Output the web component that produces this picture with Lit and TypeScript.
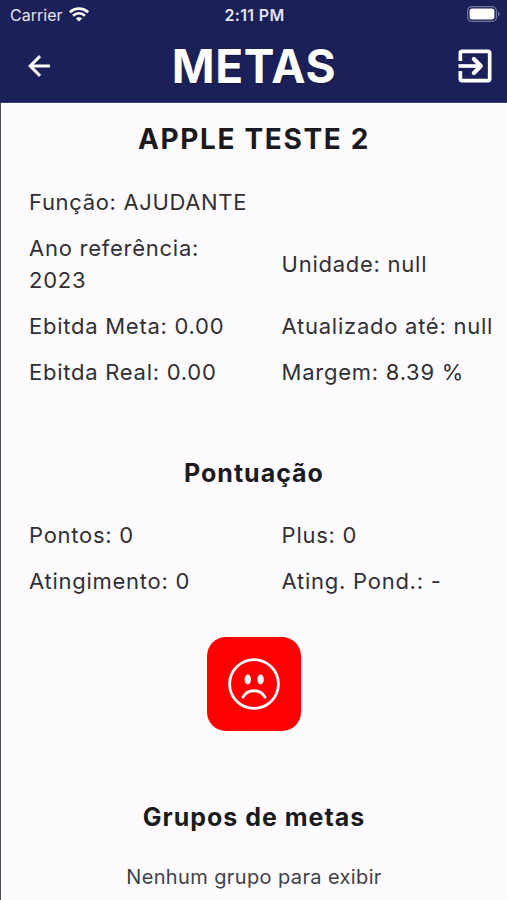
import { LitElement, html, css } from "lit";
import { customElement } from "lit/decorators.js";

@customElement("app-header")
class AppHeader extends LitElement {
  static styles = css`
    :host {
      display: flex;
      flex-direction: column;
      height: 103px;
      box-sizing: border-box;
      background: #1b2059;
      border-bottom: 1px solid #3d406c;
      color: #fff;
    }
    .status {
      display: grid;
      grid-template-columns: 1fr auto 1fr;
      align-items: center;
      height: 30px;
      padding: 0 8px 0 10px;
      font-size: 16px;
      color: #e3e4ef;
    }
    .carrier {
      display: flex;
      align-items: center;
      gap: 6px;
      letter-spacing: 0.02px;
    }
    .time {
      font-weight: 600;
      font-size: 16px;
      letter-spacing: 0.35px;
    }
    .battery {
      justify-self: end;
      display: block;
      margin-top: -2px;
      margin-right: -1px;
    }
    .wifi {
      display: block;
      margin-top: -1px;
    }
    .bar {
      display: grid;
      grid-template-columns: 76px 1fr 76px;
      align-items: center;
      height: 72px;
    }
    .bar svg {
      display: block;
    }
    .back {
      margin-left: 23px;
    }
    .exit {
      justify-self: end;
      margin-right: 10.4px;
    }
    .title {
      margin: 0;
      padding-left: 1px;
      text-align: center;
      font-size: 46px;
      line-height: 56px;
      font-weight: 700;
      letter-spacing: 0.7px;
      text-shadow: 1px 1px 2px rgba(0, 0, 0, 0.25);
    }
  `;

  render() {
    return html`
      <div class="status">
        <div class="carrier">
          <span>Carrier</span>
          <svg class="wifi" width="20" height="15" viewBox="0 0 20 15" fill="none" stroke="#fff" stroke-width="2.7">
            <path d="M0.9 5.3C6 0.3 14 0.3 19.1 5.3" />
            <path d="M4.1 8.7C7.4 5.4 12.6 5.4 15.9 8.7" />
            <path d="M10 14.6L6.9 11.4C8.6 9.8 11.4 9.8 13.1 11.4Z" fill="#fff" stroke="none" />
          </svg>
        </div>
        <span class="time">2:11 PM</span>
        <svg class="battery" width="33" height="16" viewBox="0 0 33 16">
          <rect x="0.6" y="0.6" width="28.8" height="14.8" rx="4.4" fill="none" stroke="#747799" stroke-width="1.2" />
          <rect x="2.6" y="2.6" width="24.8" height="10.8" rx="2.6" fill="#fff" />
          <path d="M31 5.5C33 6.4 33 9.6 31 10.5Z" fill="#747799" />
        </svg>
      </div>
      <div class="bar">
        <svg class="back" width="32" height="32" viewBox="0 0 24 24" fill="#fff" stroke="#fff" stroke-width="0.3">
          <path d="M20 11H7.83l5.59-5.59L12 4l-8 8 8 8 1.41-1.41L7.83 13H20v-2z" />
        </svg>
        <h1 class="title">METAS</h1>
        <svg class="exit" width="44" height="44" viewBox="0 0 24 24" fill="none" stroke="#fff" stroke-width="2">
          <path d="M4 9.3V5a1 1 0 0 1 1-1h14a1 1 0 0 1 1 1v14a1 1 0 0 1-1 1H5a1 1 0 0 1-1-1v-4.3" />
          <path d="M3 12h12" />
          <path d="M11.4 8.2L15.2 12l-3.8 3.8" stroke-width="2.3" stroke-linecap="round" stroke-linejoin="round" />
        </svg>
      </div>
    `;
  }
}

@customElement("app-root")
class AppRoot extends LitElement {
  static styles = css`
    :host {
      display: flex;
      flex-direction: column;
      height: 900px;
      overflow: hidden;
      box-sizing: border-box;
      background: #fefbff;
      font-family: Inter, "Noto Sans", sans-serif;
      color: #1b1b1f;
    }
    .content {
      flex: 1;
      display: flex;
      flex-direction: column;
      border-left: 1px solid #515156;
    }
    .name,
    .section {
      margin: 0;
      text-align: center;
      font-weight: 700;
    }
    .name {
      margin-top: 16px;
      font-size: 28px;
      line-height: 40px;
      letter-spacing: 1.65px;
    }
    .section {
      font-size: 25px;
      line-height: 36px;
      letter-spacing: 1px;
    }
    .grid {
      display: grid;
      grid-template-columns: 212px 1fr;
      column-gap: 40.6px;
      row-gap: 14px;
      align-items: center;
      margin-left: 28px;
      font-size: 22px;
      line-height: 32px;
      letter-spacing: 0.74px;
      color: #303034;
    }
    .info {
      margin-top: 27px;
      margin-bottom: 67px;
    }
    .score {
      margin-top: 28px;
    }
    .wide {
      grid-column: 1 / -1;
      letter-spacing: 0.66px;
    }
    .pair {
      white-space: nowrap;
    }
    .mood {
      align-self: center;
      display: flex;
      align-items: center;
      justify-content: center;
      width: 94px;
      height: 94px;
      margin: 40px 0 68px;
      border-radius: 19px;
      background: #fe0000;
    }
    .empty {
      margin: 27px 0 0;
      text-align: center;
      font-size: 20px;
      line-height: 30px;
      letter-spacing: 0.38px;
      color: #414145;
    }
  `;

  render() {
    return html`
      <app-header></app-header>
      <main class="content">
        <h2 class="name">APPLE TESTE 2</h2>
        <div class="grid info">
          <span class="wide">Função: AJUDANTE</span>
          <span>Ano referência:<br />2023</span>
          <span class="pair">Unidade: null</span>
          <span class="pair">Ebitda Meta: 0.00</span>
          <span class="pair">Atualizado até: null</span>
          <span class="pair">Ebitda Real: 0.00</span>
          <span class="pair">Margem: 8.39 %</span>
        </div>
        <h3 class="section">Pontuação</h3>
        <div class="grid score">
          <span class="pair">Pontos: 0</span>
          <span class="pair">Plus: 0</span>
          <span class="pair">Atingimento: 0</span>
          <span class="pair">Ating. Pond.: -</span>
        </div>
        <div class="mood">
          <svg width="52" height="52" viewBox="0 0 52 52" fill="none" stroke="#fff" stroke-width="2.8">
            <circle cx="26" cy="26" r="24.4" />
            <path d="M15 39.2C19.5 30.6 32.5 30.6 37 39.2" stroke-linecap="round" />
            <ellipse cx="19.8" cy="21.5" rx="3.2" ry="5" fill="#fff" stroke="none" />
            <ellipse cx="32.6" cy="21.5" rx="3.2" ry="5" fill="#fff" stroke="none" />
          </svg>
        </div>
        <h3 class="section">Grupos de metas</h3>
        <p class="empty">Nenhum grupo para exibir</p>
      </main>
    `;
  }
}
